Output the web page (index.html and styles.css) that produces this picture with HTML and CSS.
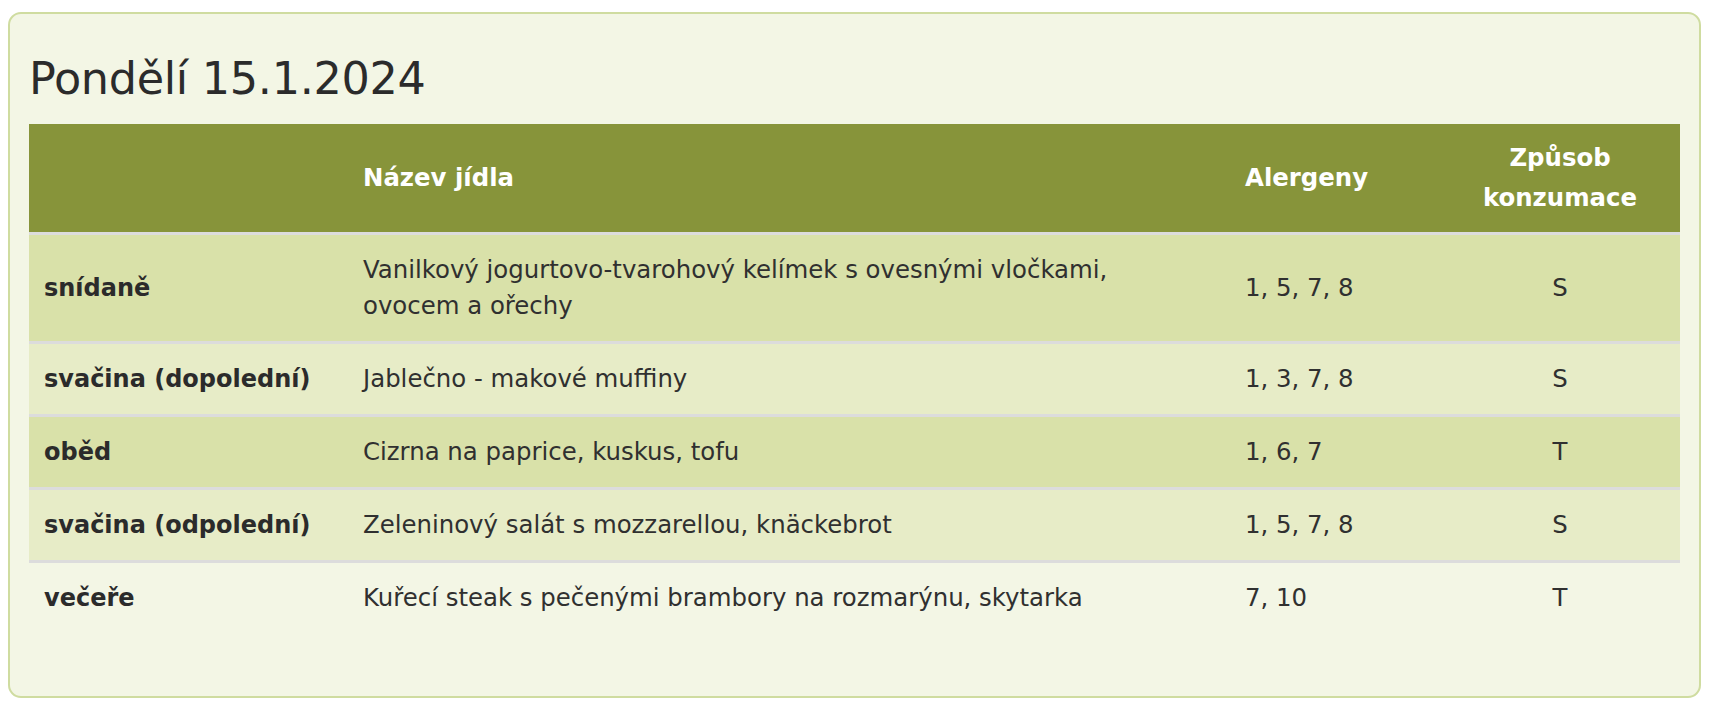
FILE: index.html
```html
<!DOCTYPE html>
<html lang="cs">
<head>
<meta charset="utf-8">
<title>Jídelníček</title>
<link rel="stylesheet" href="styles.css">
</head>
<body>
<section class="day-card">
  <h2 class="day-title">Pondělí 15.1.2024</h2>
  <table class="menu">
    <colgroup>
      <col class="c-meal">
      <col class="c-name">
      <col class="c-allergens">
      <col class="c-mode">
    </colgroup>
    <thead>
      <tr>
        <th></th>
        <th>Název jídla</th>
        <th>Alergeny</th>
        <th class="center">Způsob<br>konzumace</th>
      </tr>
    </thead>
    <tbody>
      <tr class="dark">
        <td class="meal">snídaně</td>
        <td class="name">Vanilkový jogurtovo-tvarohový kelímek s ovesnými vločkami, ovocem a ořechy</td>
        <td>1, 5, 7, 8</td>
        <td class="center">S</td>
      </tr>
      <tr class="light">
        <td class="meal">svačina (dopolední)</td>
        <td class="name">Jablečno - makové muffiny</td>
        <td>1, 3, 7, 8</td>
        <td class="center">S</td>
      </tr>
      <tr class="dark">
        <td class="meal">oběd</td>
        <td class="name">Cizrna na paprice, kuskus, tofu</td>
        <td>1, 6, 7</td>
        <td class="center">T</td>
      </tr>
      <tr class="light">
        <td class="meal">svačina (odpolední)</td>
        <td class="name">Zeleninový salát s mozzarellou, knäckebrot</td>
        <td>1, 5, 7, 8</td>
        <td class="center">S</td>
      </tr>
      <tr class="plain">
        <td class="meal">večeře</td>
        <td class="name">Kuřecí steak s pečenými brambory na rozmarýnu, skytarka</td>
        <td>7, 10</td>
        <td class="center">T</td>
      </tr>
    </tbody>
  </table>
</section>
</body>
</html>
```

FILE: styles.css
```css
html, body {
  background: #ffffff;
}
body {
  margin: 12px 9px 9px 8px;
  font-family: "DejaVu Sans", "Noto Sans", sans-serif;
  color: #303030;
}
.day-card {
  box-sizing: border-box;
  background: #f3f6e5;
  border: 2px solid #cfdca0;
  border-radius: 13px;
  padding: 37px 19px 63px 19px;
}
.day-title {
  margin: 0 0 17px 0;
  font-size: 44.5px;
  line-height: 56px;
  font-weight: normal;
  color: #2b2b2b;
  letter-spacing: -0.3px;
}
.menu {
  width: 100%;
  border-collapse: collapse;
  table-layout: fixed;
  font-size: 24.4px;
}
.c-meal { width: 319px; }
.c-name { width: 882px; }
.c-allergens { width: 210px; }
.c-mode { width: 240px; }
.menu thead th {
  background: #87943a;
  color: #ffffff;
  font-weight: bold;
  font-size: 24.4px;
  line-height: 40px;
  text-align: left;
  vertical-align: middle;
  padding: 14px 15px;
  border-bottom: 3px solid #dcdcdc;
}
.menu td {
  padding: 17px 15px;
  line-height: 36px;
  vertical-align: middle;
  border-top: 3px solid #dcdcdc;
}
.menu td.name {
  padding-right: 60px;
}
.menu tbody tr:first-child td {
  border-top: none;
}
.menu .center {
  text-align: center;
}
.menu .meal {
  font-weight: bold;
  font-size: 24px;
  color: #2b2b2b;
}
.dark td { background: #d9e1a9; }
.light td { background: #e7ecc7; }
.plain td { background: transparent; }
```
